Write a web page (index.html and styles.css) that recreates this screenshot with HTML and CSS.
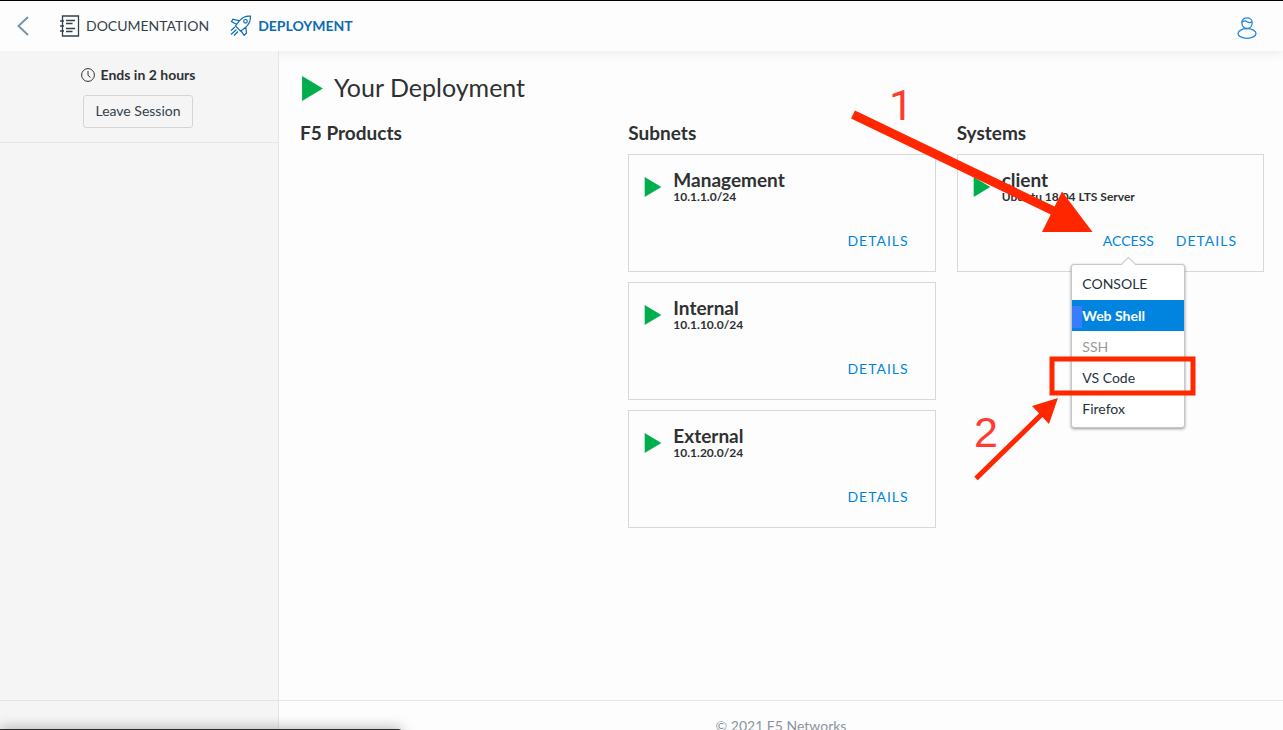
FILE: index.html
```html
<!DOCTYPE html>
<html lang="en">
<head>
<meta charset="utf-8">
<title>Your Deployment</title>
<link rel="stylesheet" href="styles.css">
</head>
<body>
<header class="topbar">
  <a class="back" href="#" aria-label="Back">
    <svg width="12" height="20" viewBox="0 0 12 20"><path d="M11 1 1.500 10l9.500 9" fill="none" stroke="#7896ab" stroke-width="2"/></svg>
  </a>
  <nav class="tabs">
    <a class="tab" href="#">
      <svg width="20" height="22" viewBox="0 0 20 22" fill="none" stroke="#33414b" stroke-width="1.3"><path d="M2.500 1h16v20h-16zM0 6h4M0 11h4M0 16h4M6 5.500h9M6 8.500h6.500M6 13.500h9M6 16.500h6.500"/></svg>
      <span>DOCUMENTATION</span>
    </a>
    <a class="tab tab-active" href="#">
      <svg width="22" height="22" viewBox="0 0 22 22" fill="none" stroke="#0c6cb4" stroke-width="1.200"><path d="M20.500 1.200c-5-.5-8 1-11 4.500L5.500 11l5.200 5.200 5-4c3.500-3 5-6 4.800-11zM9.500 5.800 3 4.200 1.500 6.500 6.700 9.500M15.800 12.200 16.500 18l-2.300 2.300-3.500-5M1 15.500l4-3.500M1 19.500l5.500-5M4 20.500l4-4"/><circle cx="15.500" cy="6.300" r="1.800"/></svg>
      <span>DEPLOYMENT</span>
    </a>
  </nav>
  <button class="user" type="button" aria-label="Account">
    <svg width="20" height="22" viewBox="0 0 20 22" fill="none" stroke="#2585e0" stroke-width="1.300"><ellipse cx="10" cy="16.500" rx="9" ry="4.800"/><path d="M4.800 5.500C4.800-.6 15.200-.6 15.200 5.500c0 8-10.400 8-10.400 0 2-2 4-2 5.200-.7 1.500 1 3.500 1 5.200 0"/></svg>
  </button>
</header>
<div class="layout">
  <aside class="sidebar">
    <div class="session">
      <p class="ends">
        <svg width="14" height="14" viewBox="0 0 14 14" fill="none" stroke="#333"><circle cx="7" cy="7" r="6.400"/><path d="M7 3v4.300l2.500 2.200"/></svg>
        <span>Ends in 2 hours</span>
      </p>
      <button class="leave" type="button">Leave Session</button>
    </div>
  </aside>
  <main class="content">
    <h1 class="title"><svg class="run run-large" viewBox="0 0 10 12"><path d="M0 0l10 6-10 6z"/></svg>Your Deployment</h1>
    <div class="columns">
      <section class="column"><h2 class="heading">F5 Products</h2></section>
      <section class="column">
        <h2 class="heading">Subnets</h2>
        <article class="card">
          <div class="info"><svg class="run" viewBox="0 0 10 12"><path d="M0 0l10 6-10 6z"/></svg><div><h3 class="name">Management</h3><p class="sub">10.1.1.0/24</p></div></div>
          <div class="actions"><button class="action" type="button">DETAILS</button></div>
        </article>
        <article class="card">
          <div class="info"><svg class="run" viewBox="0 0 10 12"><path d="M0 0l10 6-10 6z"/></svg><div><h3 class="name">Internal</h3><p class="sub">10.1.10.0/24</p></div></div>
          <div class="actions"><button class="action" type="button">DETAILS</button></div>
        </article>
        <article class="card">
          <div class="info"><svg class="run" viewBox="0 0 10 12"><path d="M0 0l10 6-10 6z"/></svg><div><h3 class="name">External</h3><p class="sub">10.1.20.0/24</p></div></div>
          <div class="actions"><button class="action" type="button">DETAILS</button></div>
        </article>
      </section>
      <section class="column">
        <h2 class="heading">Systems</h2>
        <article class="card">
          <div class="info"><svg class="run" viewBox="0 0 10 12"><path d="M0 0l10 6-10 6z"/></svg><div><h3 class="name">client</h3><p class="sub">Ubuntu 18.04 LTS Server</p></div></div>
          <div class="actions">
            <div class="access">
              <button class="action action-open" type="button">ACCESS</button>
              <div class="menu">
                <button class="item" type="button">CONSOLE</button>
                <button class="item item-selected" type="button">Web Shell</button>
                <button class="item" type="button" disabled>SSH</button>
                <button class="item" type="button">VS Code</button>
                <button class="item" type="button">Firefox</button>
              </div>
              <svg class="marks" width="360" height="400" viewBox="840 80 360 400">
                <path class="mark-line" d="M853 114.500 1062 215" stroke-width="9"/>
                <path class="mark-fill" d="M1062 191.500 1092.500 232 1042 232z"/>
                <path class="mark-line" d="M976 478.500 1042 414" stroke-width="5"/>
                <path class="mark-fill" d="M1058 398 1032 406 1049 424z"/>
                <rect class="mark-line" x="1052" y="359" width="141" height="34" stroke-width="5"/>
                <text class="mark-text mark-one" x="889" y="120">1</text>
                <text class="mark-text" x="974" y="447">2</text>
              </svg>
            </div>
            <button class="action" type="button">DETAILS</button>
          </div>
        </article>
      </section>
    </div>
  </main>
  <div class="foot-side"></div>
  <footer class="footer">© 2021 F5 Networks</footer>
  <div class="dock"></div>
</div>
</body>
</html>
```
FILE: styles.css
```css
* { box-sizing: border-box; }
body {
  margin: 0;
  height: 100vh;
  overflow: hidden;
  display: flex;
  flex-direction: column;
  font: 14px/20px Lato, "Liberation Sans", sans-serif;
  color: #2f3133;
  background: #fdfdfd;
}
h1, h2, h3, p { margin: 0; }
a { text-decoration: none; }
button { font: inherit; color: inherit; padding: 0; border: 0; background: none; }
svg { display: block; flex: none; }

.topbar {
  position: relative;
  display: flex;
  align-items: center;
  padding: 0 26px 0 17px;
  height: 51px;
  flex: none;
  border-top: 1px solid #000;
  background: #fdfdfd;
  box-shadow: 0 0 12px rgba(0, 0, 0, 0.1);
}
.tabs { display: flex; gap: 21px; margin-left: 31px; flex: 1; }
.tab { display: flex; align-items: center; gap: 6px; color: #33414b; }
.tab-active { color: #0c6cb4; font-weight: 700; }
.user { padding-top: 4px; }

.layout {
  position: relative;
  flex: 1;
  min-height: 0;
  display: grid;
  grid-template-columns: 279px 1fr;
  grid-template-rows: 1fr 30px;
}
.sidebar, .foot-side { background: #f5f5f5; border-right: 1px solid #e5e5e5; }
.session {
  display: flex;
  flex-direction: column;
  align-items: center;
  gap: 10px;
  padding: 14px 2px 14px 0;
  border-bottom: 1px solid #e5e5e5;
}
.ends { display: flex; align-items: center; gap: 6px; font-weight: 700; }
.leave {
  padding: 5px 11px 6px;
  border: 1px solid #d5d5d5;
  border-radius: 3px;
  color: #33414b;
}

.content { padding: 20px 19px 0 22px; }
.title { display: flex; align-items: center; gap: 10px; font-size: 25px; line-height: 32px; font-weight: 400; }
.run { width: 18px; height: 20px; fill: #00ae4d; }
.run-large { width: 23px; height: 25px; margin-top: 2px; }
.columns { display: grid; grid-template-columns: repeat(3, 1fr); gap: 21px; margin: 18px 0 0 -1px; }
.heading { font-size: 19px; line-height: 24px; margin-bottom: 9px; }
.card { border: 1px solid #d8d8d8; height: 118px; padding: 15px 26px 20px 15px; margin-bottom: 10px; display: flex; flex-direction: column; justify-content: space-between; }
.info { display: flex; align-items: center; gap: 11px; }
.name { font-size: 19px; line-height: 20px; }
.sub { font-size: 12px; line-height: 13px; font-weight: 700; }
.actions { display: flex; justify-content: flex-end; gap: 22px; color: #0084e0; }
.access { position: relative; }
.action { display: block; letter-spacing: 1px; }
.action-open { letter-spacing: normal; }

.menu {
  position: absolute;
  top: 33px;
  left: 50%;
  width: 114px;
  margin-left: -57px;
  padding: 3px 0;
  display: flex;
  flex-direction: column;
  background: #fff;
  border: 1px solid #c3c8cd;
  border-radius: 3px;
  box-shadow: 0 1px 3px rgba(0, 0, 0, 0.4);
}
.menu::before {
  content: "";
  position: absolute;
  top: -6px;
  left: 51px;
  width: 10px;
  height: 10px;
  border: 1px solid #c3c8cd;
  border-right: 0;
  border-bottom: 0;
  background: #fff;
  transform: rotate(45deg);
}
.item { position: relative; height: 31px; padding: 0 10px; text-align: left; color: #25333d; }
.item:first-child { height: 32px; }
.item:disabled { color: #9a9a9a; }
.item-selected { background: #0084e0; color: #fff; font-weight: 700; }
.item-selected::before {
  content: "";
  position: absolute;
  left: 0;
  top: 6px;
  width: 10px;
  height: 22px;
  background: #397dff;
}

.marks { position: absolute; top: -151px; right: -46px; pointer-events: none; }
.mark-line { fill: none; stroke: #ff2600; }
.mark-fill { fill: #ff2600; }
.mark-text { fill: #ff3b30; font: 43px "Liberation Sans", sans-serif; }
.mark-one { font-family: Roboto, sans-serif; }

.foot-side, .footer { border-top: 1px solid #e5e5e5; }
.footer { padding-top: 15px; overflow: hidden; text-align: center; color: #8a959e; }
.dock {
  position: absolute;
  left: 0;
  bottom: -9px;
  width: 402px;
  height: 10px;
  border-radius: 0 4px 0 0;
  background: #2b2b2b;
  box-shadow: 0 0 14px rgba(0, 0, 0, 0.35);
}
```
